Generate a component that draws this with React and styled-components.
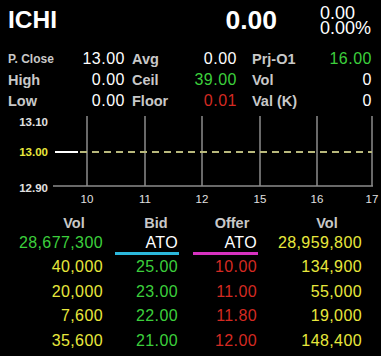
import React from "react";
import styled, { createGlobalStyle } from "styled-components";

const GREEN = "#3ccf3c";
const YELLOW = "#e8e83c";
const RED = "#d42a22";
const GRAY = "#c8c8c8";

const stats = [
  [
    { label: "P. Close", value: "13.00", small: true },
    { label: "Avg", value: "0.00" },
    { label: "Prj-O1", value: "16.00", color: GREEN },
  ],
  [
    { label: "High", value: "0.00" },
    { label: "Ceil", value: "39.00", color: GREEN },
    { label: "Vol", value: "0" },
  ],
  [
    { label: "Low", value: "0.00" },
    { label: "Floor", value: "0.01", color: RED },
    { label: "Val (K)", value: "0" },
  ],
];

const book = [
  ["40,000", "25.00", "10.00", "134,900"],
  ["20,000", "23.00", "11.00", "55,000"],
  ["7,600", "22.00", "11.80", "19,000"],
  ["35,600", "21.00", "12.00", "148,400"],
];

// column layout of the order book: header offset, value padding
const cols = [
  { hl: 38, pr: 7 },
  { hl: 17, pr: 7 },
  { hl: 14, pr: 8 },
  { hl: 8, pr: 19 },
];

const gridX = [87, 145, 202, 260, 317, 372];
const gridLabels = ["10", "11", "12", "15", "16", "17"];

const App = () => {
  return (
    <Screen>
      <GlobalStyle />
      <Header>
        <Symbol>ICHI</Symbol>
        <Price>0.00</Price>
        <Change>
          <ChangeLine>0.00</ChangeLine>
          <ChangeLine>0.00%</ChangeLine>
        </Change>
      </Header>

      <StatsGrid>
        {stats.map((row, i) =>
          row.map((s, j) => (
            <React.Fragment key={`${i}-${s.label}`}>
              <StatLabel $small={s.small} $pad={[0, 7, 15][j]}>{s.label}</StatLabel>
              <StatValue $color={s.color}>{s.value}</StatValue>
            </React.Fragment>
          ))
        )}
      </StatsGrid>

      <Chart width="381" height="95" viewBox="0 111 381 95">
        <g fontFamily="Liberation Sans, Arial, sans-serif" fontWeight="700" fontSize="11.5">
          <text x="48" y="126" fill="#e0e0e0" textAnchor="end">13.10</text>
          <text x="48" y="156" fill={YELLOW} textAnchor="end">13.00</text>
          <text x="48" y="192" fill="#e0e0e0" textAnchor="end">12.90</text>
        </g>
        {gridX.map((x) => (
          <line key={x} x1={x} y1="116" x2={x} y2="186" stroke="#8c8c8c" strokeWidth="1.5" />
        ))}
        <line x1="53" y1="186" x2="373" y2="186" stroke="#8c8c8c" strokeWidth="1.5" />
        <line x1="80" y1="152" x2="372" y2="152" stroke="#b9b97c" strokeWidth="2" strokeDasharray="7 5" />
        <line x1="55" y1="152" x2="78" y2="152" stroke="#ffffff" strokeWidth="2" />
        <g fontFamily="Liberation Sans, Arial, sans-serif" fontSize="11.5" fill="#e0e0e0">
          {gridX.map((x, i) => (
            <text key={x} x={Math.min(x, 375)} y="203" textAnchor="middle">
              {gridLabels[i]}
            </text>
          ))}
        </g>
      </Chart>

      <Book>
        {["Vol", "Bid", "Offer", "Vol"].map((h, i) => (
          <BookHead key={i} $hl={cols[i].hl}>{h}</BookHead>
        ))}

        <BookCell $pr={cols[0].pr} $color={GREEN} $tight>28,677,300</BookCell>
        <BookCell $pr={cols[1].pr} $color="#ffffff" $tight>ATO</BookCell>
        <BookCell $pr={cols[2].pr} $color="#ffffff" $tight>ATO</BookCell>
        <BookCell $pr={cols[3].pr} $color={YELLOW} $tight>28,959,800</BookCell>

        <span />
        <Bar $color="#2cb8dc" $ml={5} $mr={6} />
        <Bar $color="#d632c0" $ml={8} $mr={7} />
        <span />

        {book.map((row, r) =>
          row.map((v, i) => (
            <BookCell
              key={`${r}-${i}`}
              $pr={cols[i].pr}
              $color={i === 1 ? GREEN : i === 2 ? RED : YELLOW}
            >
              {v}
            </BookCell>
          ))
        )}
      </Book>
    </Screen>
  );
};

export default App;

// --- Styled Components ---

const GlobalStyle = createGlobalStyle`
  html, body {
    margin: 0;
    padding: 0;
    background: #000;
  }
  body {
    font-family: "Liberation Sans", Arial, sans-serif;
    color: #fff;
  }
`;

const Screen = styled.div`
  width: 381px;
  height: 356px;
  background: #000;
  overflow: hidden;
`;

const Header = styled.header`
  height: 40px;
  display: flex;
  align-items: center;
  padding: 0 5px 0 8px;
`;

const Symbol = styled.h1`
  margin: 0;
  flex: 1;
  font-size: 24.5px;
  font-weight: 700;
  line-height: 1;
  color: #fff;
`;

const Price = styled.div`
  font-size: 26.5px;
  font-weight: 700;
  line-height: 1;
  margin-right: 43px;
`;

const Change = styled.div`
  display: flex;
  flex-direction: column;
  padding-top: 2px;
  width: 56px;
`;

const ChangeLine = styled.span`
  display: block;
  height: 15px;
  font-size: 18px;
  line-height: 15px;
  white-space: nowrap;
`;

const StatsGrid = styled.div`
  margin-top: 8px;
  display: grid;
  grid-template-columns: 72px 45px 62px 50px 70px 65px;
  grid-auto-rows: 21px;
  align-items: center;
  padding-left: 8px;
`;

const StatLabel = styled.span`
  font-size: ${(p) => (p.$small ? "12px" : "14.5px")};
  font-weight: 700;
  color: ${GRAY};
  white-space: nowrap;
  padding-left: ${(p) => p.$pad}px;
`;

const StatValue = styled.span`
  font-size: 16px;
  letter-spacing: 0.5px;
  color: ${(p) => p.$color || "#fff"};
  text-align: right;
  white-space: nowrap;
`;

const Chart = styled.svg`
  display: block;
`;

const Book = styled.div`
  padding-top: 6px;
  display: grid;
  grid-template-columns: 110px 75px 80px 116px;
`;

const BookHead = styled.div`
  font-size: 14.5px;
  font-weight: 700;
  color: ${GRAY};
  line-height: 22px;
  text-align: center;
  padding-left: ${(p) => p.$hl}px;
`;

const BookCell = styled.div`
  font-size: 16px;
  letter-spacing: 0.4px;
  color: ${(p) => p.$color};
  text-align: right;
  padding-right: ${(p) => p.$pr}px;
  line-height: ${(p) => (p.$tight ? "18px" : "24.5px")};
  white-space: nowrap;
`;

const Bar = styled.div`
  height: 3px;
  background: ${(p) => p.$color};
  margin-left: ${(p) => p.$ml}px;
  margin-right: ${(p) => p.$mr}px;
`;
